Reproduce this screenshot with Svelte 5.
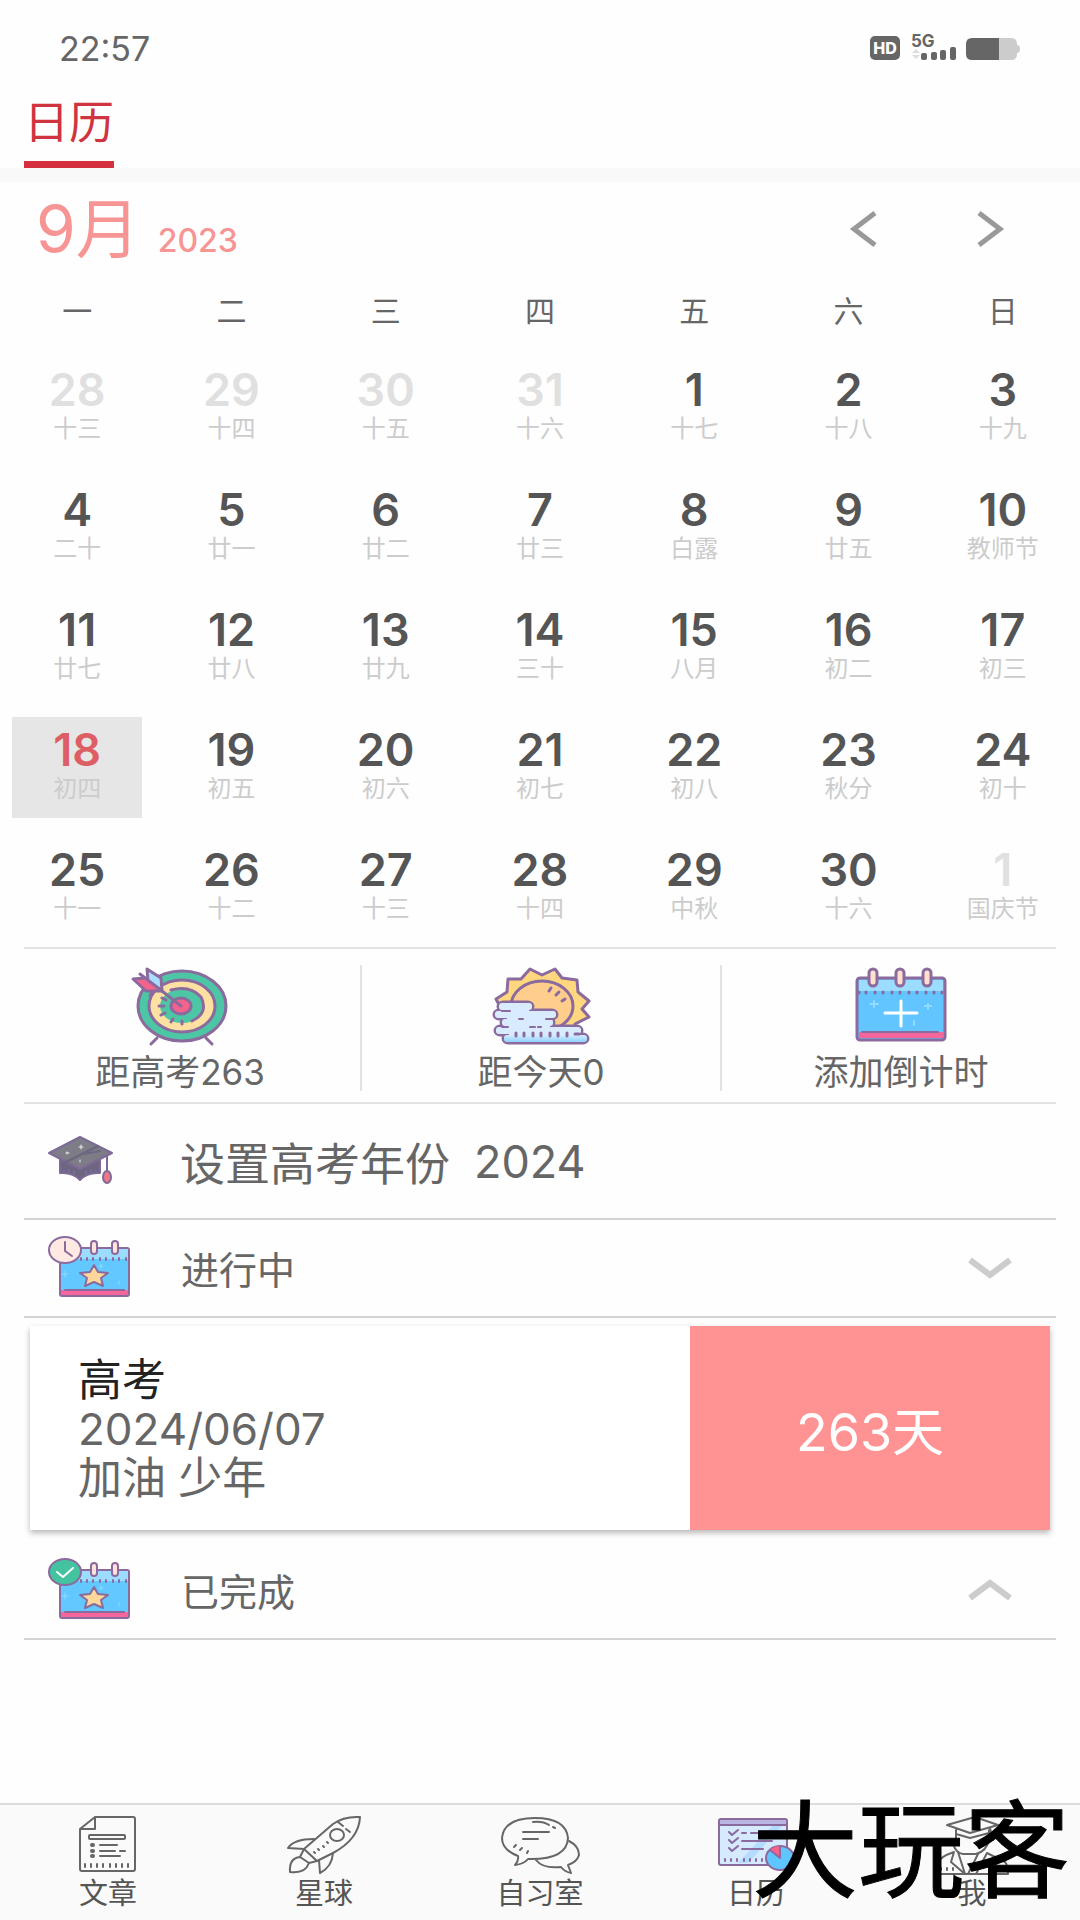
<script lang="ts">
  type Day = { day: number; lunar: string; outside?: boolean };

  const weekdays = ["一", "二", "三", "四", "五", "六", "日"];

  const lunar = [
    ["十三", "十四", "十五", "十六", "十七", "十八", "十九"],
    ["二十", "廿一", "廿二", "廿三", "白露", "廿五", "教师节"],
    ["廿七", "廿八", "廿九", "三十", "八月", "初二", "初三"],
    ["初四", "初五", "初六", "初七", "初八", "秋分", "初十"],
    ["十一", "十二", "十三", "十四", "中秋", "十六", "国庆节"],
  ];

  // september 2023 starts on a friday, four days of august come before it
  const weeks: Day[][] = lunar.map((names, week) =>
    names.map((name, i) => {
      const n = week * 7 + i - 3;
      if (n < 1) return { day: n + 31, lunar: name, outside: true };
      if (n > 30) return { day: n - 30, lunar: name, outside: true };
      return { day: n, lunar: name };
    })
  );

  let selected = $state(18);

  const tabs = [
    { id: "article", label: "文章" },
    { id: "planet", label: "星球" },
    { id: "study", label: "自习室" },
    { id: "calendar", label: "日历" },
    { id: "me", label: "我" },
  ];
</script>

{#snippet smallCalendar(done: boolean)}
  <svg class="row-icon" width="83" height="62" viewBox="0 0 83 62" fill="none" stroke="#8b6a9e" stroke-width="2" stroke-linecap="round" stroke-linejoin="round">
    <rect x="12" y="12" width="69" height="48" rx="2" fill="#62c8ff" />
    <path d="M13 13H80V23H13Z" fill="#9bdcff" stroke="none" />
    <path d="M13 54H80V59H13Z" fill="#f5679c" stroke="none" />
    <path d="M17 54H76" />
    <path d="M33 22v2M39 22v2M45 22v2M52 22v2M58 22v2M65 22v2M71 22v2M78 22v2" />
    <rect x="43" y="5" width="6" height="13" rx="3" fill="#ffe3dc" />
    <rect x="64" y="5" width="6" height="13" rx="3" fill="#ffe3dc" />
    <path d="M46 29l4 7 10 1-7 5 2 8-9-4-9 4 2-8-7-5 10-1Z" fill="#ffd79b" />
    <path d="M17 35v6M14 38h6M53 28v4M51 30h4M71 45v3" stroke="#8fdcff" stroke-width="1" />
    <ellipse cx="17" cy="14" rx="16" ry="13" fill={done ? "#43c3a0" : "#ffe9e2"} />
    {#if done}
      <path d="M9 14l6 5 10-9" stroke="#fff" />
    {:else}
      <path d="M17 6v9l7 5" />
    {/if}
  </svg>
{/snippet}

<div class="page">
  <header class="status">
    <time>22:57</time>
    <svg width="152" height="28" viewBox="0 0 152 28" fill="#666">
      <rect x="1" y="2" width="30" height="24" rx="5" />
      <text x="16" y="20" text-anchor="middle" font-size="16" font-weight="800" fill="#fff">HD</text>
      <text x="42" y="13" font-size="17" font-weight="700">5G</text>
      <path d="M43 19l4-4 4 4ZM43 21l4 4 4-4Z" fill="#ddd" />
      <rect x="52" y="19" width="6" height="7" rx="2" />
      <rect x="62" y="18" width="6" height="8" rx="2" />
      <rect x="71" y="16" width="6" height="10" rx="2" />
      <rect x="81" y="13" width="6" height="13" rx="2" />
      <path d="M130 4h12q6 0 6 6v1q3 0 3 4t-3 4v1q0 6-6 6h-12Z" fill="#ccc" />
      <path d="M130 4h-27q-6 0-6 6v10q0 6 6 6h27Z" />
    </svg>
  </header>

  <nav class="top-tabs">
    <a href="#calendar" class="top-tab">日历</a>
  </nav>

  <main>
    <div class="month">
      <h1>9月 <small>2023</small></h1>
      <button aria-label="上个月">
        <svg width="28" height="38" viewBox="0 0 28 38" fill="none" stroke="#999" stroke-width="5"><path d="M26 3L5 19l21 16" /></svg>
      </button>
      <button aria-label="下个月">
        <svg width="28" height="38" viewBox="0 0 28 38" fill="none" stroke="#999" stroke-width="5"><path d="M2 3l21 16L2 35" /></svg>
      </button>
    </div>

    <table>
      <thead>
        <tr>
          {#each weekdays as name}
            <th>{name}</th>
          {/each}
        </tr>
      </thead>
      <tbody>
        {#each weeks as week}
          <tr>
            {#each week as d}
              <td>
                <button
                  class="day"
                  class:outside={d.outside}
                  class:selected={!d.outside && d.day === selected}
                  onclick={() => (selected = d.day)}
                >
                  <span class="num">{d.day}</span>
                  <span class="lunar">{d.lunar}</span>
                </button>
              </td>
            {/each}
          </tr>
        {/each}
      </tbody>
    </table>

    <section class="shortcuts">
      <div class="shortcut-grid">
        <button>
          <svg width="96" height="80" viewBox="0 0 96 80" fill="none" stroke="#8b6a9e" stroke-width="3" stroke-linecap="round" stroke-linejoin="round">
            <path d="M25 71l-6 6M74 71l6 6" />
            <ellipse cx="50" cy="39" rx="44" ry="35" fill="#4cc6a4" />
            <ellipse cx="50" cy="39" rx="33" ry="26" fill="#ffe0a3" />
            <ellipse cx="50" cy="39" rx="22" ry="17" fill="#4cc6a4" stroke="none" />
            <path d="M39 23Q58 18 69 30Q77 46 60 54" />
            <path d="M30 31l4 2M27 39h5M29 48l4-2M39 55l2-3M50 57v-3M18 29l2-4" />
            <ellipse cx="49" cy="39" rx="10" ry="8" fill="#f5628b" />
            <path d="M8 7l22 17 19 15" />
            <path d="M15 2l14 9 1 13-14-10Z" fill="#a9dcff" />
            <path d="M1 12l12-1 17 13H14Z" fill="#f5628b" />
          </svg>
          <span>距高考263</span>
        </button>
        <button>
          <svg width="98" height="80" viewBox="0 0 98 80" fill="none" stroke="#8b6a9e" stroke-width="3" stroke-linejoin="round" stroke-linecap="round">
            <defs>
              <linearGradient id="mist" x1="0" y1="0" x2="0" y2="1">
                <stop offset="0" stop-color="#d6ecff" />
                <stop offset="1" stop-color="#8fd3ff" />
              </linearGradient>
            </defs>
            <path d="M4 32l11-7 1-13h13l9-10 12 6 13-6 7 9 15 2 1 12 11 9-7 8 7 8-14 7v5H20Z" fill="#ffd77e" />
            <ellipse cx="50" cy="39" rx="31" ry="25" fill="#ffcd8c" />
            <path d="M57 24l2-3M64 28l3-3M70 34l3-2" />
            <g stroke-width="5">
              <rect x="7" y="36" width="33" height="7" rx="4" />
              <rect x="3" y="44" width="61" height="7" rx="4" />
              <rect x="10" y="52" width="51" height="7" rx="4" />
              <rect x="4" y="60" width="85" height="7" rx="4" />
              <rect x="12" y="68" width="83" height="7" rx="4" />
            </g>
            <g stroke="none" fill="#d9ecff">
              <rect x="7" y="36" width="33" height="7" rx="3" />
              <rect x="3" y="44" width="61" height="7" rx="3" />
              <rect x="10" y="52" width="51" height="7" rx="3" />
              <rect x="4" y="60" width="85" height="7" rx="3" />
              <path d="M14 41h23v6H14ZM15 48h43v7H15ZM15 56h43v7H15ZM17 64h70v7H17Z" />
            </g>
            <rect x="12" y="68" width="83" height="7" rx="3" fill="url(#mist)" stroke="none" />
            <path d="M10 44h8M27 52h4M54 52h7M10 60h6M38 60h5M46 60h3" stroke-width="2" />
            <path d="M24 66v3M32 66v3M41 66v3M49 66v3M58 66v3M66 66v3M75 66v3M83 67h4" />
          </svg>
          <span>距今天0</span>
        </button>
        <button>
          <svg width="92" height="80" viewBox="0 0 92 80" fill="none" stroke="#8b6a9e" stroke-width="3" stroke-linecap="round" stroke-linejoin="round">
            <rect x="2" y="11" width="88" height="62" rx="3" fill="#62c5ff" />
            <path d="M4 13H88V24H4Z" fill="#9bdcff" stroke="none" />
            <path d="M4 65H88V71H4Z" fill="#f5679c" stroke="none" />
            <path d="M7 65H83" stroke-width="2" />
            <path d="M4 25v1M11 25v1M20 25v1M28 25v1M37 25v1M45 25v1M54 25v1M62 25v1M71 25v1M79 25v1M87 25v1" />
            <rect x="14" y="2" width="8" height="17" rx="4" fill="#ffe0cf" />
            <rect x="41" y="2" width="8" height="17" rx="4" fill="#ffe0cf" />
            <rect x="68" y="2" width="8" height="17" rx="4" fill="#ffe0cf" />
            <path d="M19 34v6M15 37h8M73 37v5M70 39h6M59 54v4" stroke="#8fdcff" stroke-width="2" />
            <path d="M46 34v25M30 46h32" stroke="#fff" />
          </svg>
          <span>添加倒计时</span>
        </button>
      </div>
    </section>

    <section class="list">
      <button class="row year">
        <svg class="row-icon" width="66" height="50" viewBox="0 0 66 50" fill="none" stroke="#7d6a96" stroke-width="2" stroke-linejoin="round" stroke-linecap="round">
          <path d="M12 22v15q13-1 20 7 7-8 20-7V22Z" fill="#6c6680" />
          <path d="M1 17L32 1l32 16-32 16Z" fill="#7e7c86" />
          <path d="M18 26L50 10M35 18l17-3" stroke="#6c6680" />
          <path d="M16 35v2M21 34v2M26 35v2M38 35v2M43 34v2M48 35v2" />
          <path d="M59 19v15" />
          <ellipse cx="59" cy="41" rx="4" ry="6" fill="#f0768a" />
          <path d="M33 9v4M31 11h4M19 16v2M18 17h3M32 24v2" stroke="#eee" stroke-width="1" />
        </svg>
        <span>设置高考年份</span>
        <span class="value">2024</span>
      </button>

      <button class="row">
        {@render smallCalendar(false)}
        <span>进行中</span>
        <svg class="chevron" width="44" height="24" viewBox="0 0 44 24" fill="none" stroke="#ccc" stroke-width="6"><path d="M2 5l20 15L42 5" /></svg>
      </button>

      <article class="card">
        <div class="info">
          <h2>高考</h2>
          <p>2024/06/07</p>
          <p>加油 少年</p>
        </div>
        <div class="count">263天</div>
      </article>

      <button class="row">
        {@render smallCalendar(true)}
        <span>已完成</span>
        <svg class="chevron" width="44" height="24" viewBox="0 0 44 24" fill="none" stroke="#ccc" stroke-width="6"><path d="M2 21L22 6l20 15" /></svg>
      </button>
    </section>
  </main>

  <nav class="bottom">
    {#each tabs as tab}
      <a href="#{tab.id}">
        <svg width="76" height="60" viewBox="0 0 76 60" fill="none" stroke="#666" stroke-width="2" stroke-linecap="round" stroke-linejoin="round">
          {#if tab.id === "article"}
            <path d="M25 2h38q2 0 2 2v50q0 2-2 2H12q-2 0-2-2V14ZM25 2v12H10" />
            <rect x="19" y="20" width="36" height="4" rx="1" />
            <path d="M30 30h17M30 36h15M50 36h5M30 41h20" />
            <path d="M22 30h1M22 36h1M22 41h1" stroke-width="4" />
            <path d="M15 49v3M21 49v3M27 49v3M33 49v3M40 49v3M46 49v3M52 49v3M58 49v3" />
          {:else if tab.id === "planet"}
            <path d="M74 2Q58 1 47 9L18 34l13 12 16-8Q73 24 74 2Z" />
            <path d="M28 24Q8 24 2 33l16 1M47 38q-1 14-13 20l-1-13M18 34l-4 8 9 6 8-2M14 42Q3 43 4 57q15 2 19-9" />
            <ellipse cx="51" cy="20" rx="7" ry="6" />
            <path d="M52 7l5 4M60 14l4 3M28 37l1 1M32 34l1 1M37 31l1 1M41 27l1 1" />
          {:else if tab.id === "study"}
            <path d="M16 41Q0 35 0 23Q2 3 33 3T66 23Q65 45 26 44Q22 49 13 50Q17 45 16 41Z" />
            <path d="M67 26q10 5 10 14-2 7-11 10l3 8q-6-1-10-6-18 2-25-7M31 7q10-1 16 3M51 12l2 1M21 17h26M21 24h15M12 32l2-2M18 35l2-2M25 38l1-2" />
          {:else if tab.id === "calendar"}
            <g stroke="#8b6a9e">
              <rect x="1" y="4" width="68" height="46" rx="2" fill="#d5eaff" />
              <path d="M2 5H68V10H2Z" fill="#b9b6e4" stroke="none" />
              <path d="M20 48L55 10h10L30 48Z" fill="#b4dcff" stroke="none" />
              <path d="M1 10H69M11 17l3 3 6-5M11 25l3 3 6-5M11 33l3 3 6-5M24 18h4M33 18h21M24 26h30M24 34h21" />
              <path d="M7 44v2M13 44v2M19 44v2M26 44v2M32 44v2M38 44v2M44 44v2" />
              <ellipse cx="62" cy="43" rx="14" ry="12" fill="#5fc5ff" />
              <path d="M62 43L52 35q4-4 10-4Z" fill="#f5628b" stroke="none" />
              <path d="M52 35l10 8V31" />
            </g>
          {:else}
            <path d="M13 10L41 2l23 8-28 8ZM22 15v9l-3 5q3 9 10 10h13q11-3 13-15v-9M22 19l14 4 19-5" />
            <path d="M3 59V49q2-7 17-12l-3 10 14 12L24 37M44 39L34 59M53 38L42 59M53 38l18 9q3 3 3 12H3M7 53v2M13 53v2M19 53v2M58 53v2M64 53v2M70 53v2M56 13l3 12" />
          {/if}
        </svg>
        <span>{tab.label}</span>
      </a>
    {/each}
    <div class="watermark">大玩客</div>
  </nav>
</div>

<style>
  :global(body) {
    background: #fefefe;
  }

  .page {
    min-height: 100vh;
    display: flex;
    flex-direction: column;
    color: #666;
    font-family: Inter, "Noto Sans CJK SC", sans-serif;
  }

  button {
    border: 0;
    padding: 0;
    background: none;
    color: inherit;
    font: inherit;
    cursor: pointer;
  }

  a {
    color: inherit;
    text-decoration: none;
  }

  svg {
    display: block;
    flex: none;
    overflow: visible;
  }

  .status {
    display: flex;
    justify-content: space-between;
    align-items: center;
    height: 96px;
    padding: 0 59px;
    font-size: 34px;
  }

  .top-tabs {
    display: flex;
    padding: 0 24px;
    border-bottom: 14px solid #f9f9f9;
  }

  .top-tab {
    height: 65px;
    border-bottom: 7px solid #d5303e;
    color: #cf3440;
    font-size: 45px;
    line-height: 54px;
  }

  .month {
    display: flex;
    align-items: center;
    height: 93px;
    padding: 0 57px 0 36px;
  }

  .month h1 {
    flex: 1;
    margin: 0;
    padding-top: 12px;
    color: #f79494;
    font-size: 64px;
    font-weight: 400;
    line-height: 81px;
  }

  .month small {
    font-size: 32px;
    font-weight: 500;
  }

  .month button {
    display: flex;
    justify-content: center;
    width: 64px;
  }

  .month button + button {
    margin-left: 64px;
  }

  table {
    width: 100%;
    table-layout: fixed;
    border-collapse: collapse;
  }

  th {
    height: 72px;
    padding: 0;
    font-size: 30px;
    font-weight: 400;
    line-height: 40px;
  }

  td {
    height: 120px;
    padding: 0 12px;
  }

  .day {
    display: flex;
    flex-direction: column;
    align-items: center;
    width: 100%;
    padding: 13px 0 11px;
  }

  .num {
    color: #555;
    font-size: 45px;
    font-weight: 600;
    line-height: 40px;
  }

  .lunar {
    color: #ccc;
    font-size: 24px;
    line-height: 37px;
  }

  .outside .num {
    color: #e0e0e0;
  }

  .selected {
    background: #e6e6e6;
  }

  .selected .num {
    color: #dd5e64;
  }

  .shortcuts {
    margin: 0 24px;
    padding: 16px 0 11px;
    border-top: 2px solid #e2e2e2;
    border-bottom: 2px solid #e2e2e2;
  }

  .shortcut-grid {
    display: grid;
    grid-template-columns: repeat(3, 1fr);
    margin: 0 -24px;
  }

  .shortcuts button {
    display: flex;
    flex-direction: column;
    align-items: center;
    gap: 6px;
    padding-top: 2px;
    font-size: 35px;
    line-height: 38px;
  }

  .shortcuts button + button {
    border-left: 2px solid #e2e2e2;
  }

  .list {
    margin: 0 24px;
  }

  .row {
    display: flex;
    align-items: center;
    width: 100%;
    height: 98px;
    padding: 0 44px 2px 24px;
    border-bottom: 2px solid #d3d3d3;
    font-size: 38px;
  }

  .row-icon {
    margin-right: 50px;
  }

  .year {
    height: 116px;
    padding-bottom: 0;
    font-size: 45px;
  }

  .year .row-icon {
    margin-right: 66px;
  }

  .value {
    margin-left: 24px;
  }

  .chevron {
    margin-left: auto;
  }

  .card {
    display: flex;
    margin: 8px 6px 12px;
    background: #fff;
    box-shadow: 0 3px 6px rgba(0, 0, 0, 0.28);
  }

  .info {
    flex: 1;
    padding: 30px 48px 27px;
    font-size: 44px;
    line-height: 49px;
  }

  .info h2,
  .info p {
    margin: 0;
    font-size: inherit;
    font-weight: 400;
  }

  .info h2 {
    color: #222;
  }

  .count {
    display: flex;
    align-items: center;
    justify-content: center;
    width: 360px;
    background: #ff9292;
    color: #fff;
    font-size: 52px;
  }

  .bottom {
    position: relative;
    display: grid;
    grid-template-columns: repeat(5, 1fr);
    margin-top: auto;
    border-top: 2px solid #ddd;
    background: #fafafa;
  }

  .bottom a {
    display: flex;
    flex-direction: column;
    align-items: center;
    padding: 10px 0 7px;
    color: #555;
    font-size: 29px;
    line-height: 38px;
  }

  .watermark {
    position: absolute;
    top: -8px;
    right: 10px;
    color: #000;
    font-size: 106px;
    line-height: 108px;
    -webkit-text-stroke: 1px #000;
    pointer-events: none;
  }
</style>
